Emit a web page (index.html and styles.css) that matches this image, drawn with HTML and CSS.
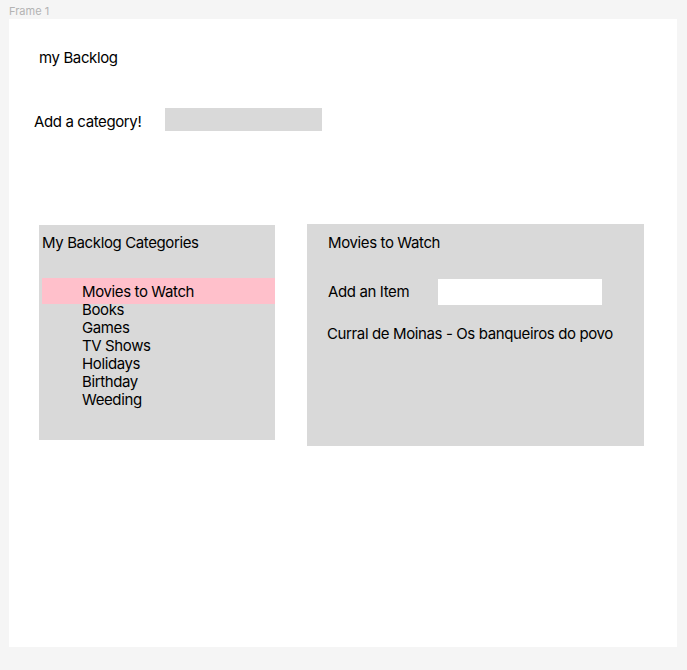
FILE: index.html
```html
<!DOCTYPE html>
<html lang="en">
<head>
    <meta charset="UTF-8">
    <meta name="viewport" content="width=device-width, initial-scale=1.0">
    <title>my Backlog</title>
    <link rel="stylesheet" href="styles.css">
</head>
<body>
    <div class="frame-label">Frame 1</div>
    <div class="frame">
        <h1 class="title">my Backlog</h1>
        <div class="add-category">
            <label for="category">Add a category!</label>
            <input type="text" id="category">
        </div>
        <div class="panels">
            <div class="categories">
                <h2>My Backlog Categories</h2>
                <ul class="category-list">
                    <li class="active">Movies to Watch</li>
                    <li>Books</li>
                    <li>Games</li>
                    <li>TV Shows</li>
                    <li>Holidays</li>
                    <li>Birthday</li>
                    <li>Weeding</li>
                </ul>
            </div>
            <div class="items">
                <h2>Movies to Watch</h2>
                <div class="add-item">
                    <label for="item">Add an Item</label>
                    <input type="text" id="item">
                </div>
                <ul class="item-list">
                    <li>Curral de Moinas - Os banqueiros do povo</li>
                </ul>
            </div>
        </div>
    </div>
</body>
</html>
```

FILE: styles.css
```css
body {
    margin: 0;
    background: #f5f5f5;
    font-family: Inter, "Noto Sans", sans-serif;
    font-size: 15px;
    line-height: 18px;
    letter-spacing: -0.38px;
    color: #000;
}
h1, h2, ul {
    margin: 0;
    padding: 0;
    font-size: 15px;
    font-weight: normal;
}
ul {
    list-style: none;
}
input {
    border: none;
    outline: none;
    padding: 0;
}
.frame-label {
    height: 19px;
    padding-left: 9px;
    font-size: 11px;
    line-height: 22px;
    letter-spacing: 0;
    color: #b3b3b3;
}
.frame {
    margin-left: 9px;
    width: 668px;
    height: 628px;
    padding-top: 30px;
    box-sizing: border-box;
    background: white;
}
.title {
    margin-left: 30px;
}
.add-category {
    display: flex;
    align-items: center;
    margin-top: 41px;
    margin-left: 25px;
}
.add-category label {
    width: 131px;
    padding-top: 4px;
}
.add-category input {
    width: 157px;
    height: 23px;
    background: #d9d9d9;
}
.panels {
    display: flex;
    align-items: flex-start;
    margin-top: 93px;
}
.categories {
    margin-top: 1px;
    margin-left: 30px;
    width: 236px;
    height: 215px;
    padding: 9px 0 0 3px;
    box-sizing: border-box;
    background: #d9d9d9;
}
.category-list {
    margin-top: 26px;
}
.category-list li {
    padding-left: 40px;
}
.category-list li.active {
    padding-top: 5px;
    padding-bottom: 3px;
    margin-bottom: -3px;
    background: #ffc0cb;
}
.items {
    margin-left: 32px;
    width: 337px;
    height: 222px;
    padding: 10px 0 0 21px;
    box-sizing: border-box;
    background: #d9d9d9;
}
.add-item {
    display: flex;
    align-items: center;
    margin-top: 27px;
}
.add-item label {
    width: 110px;
}
.add-item input {
    width: 164px;
    height: 26px;
    background: white;
}
.item-list {
    margin-top: 20px;
    margin-left: -1px;
}
```
